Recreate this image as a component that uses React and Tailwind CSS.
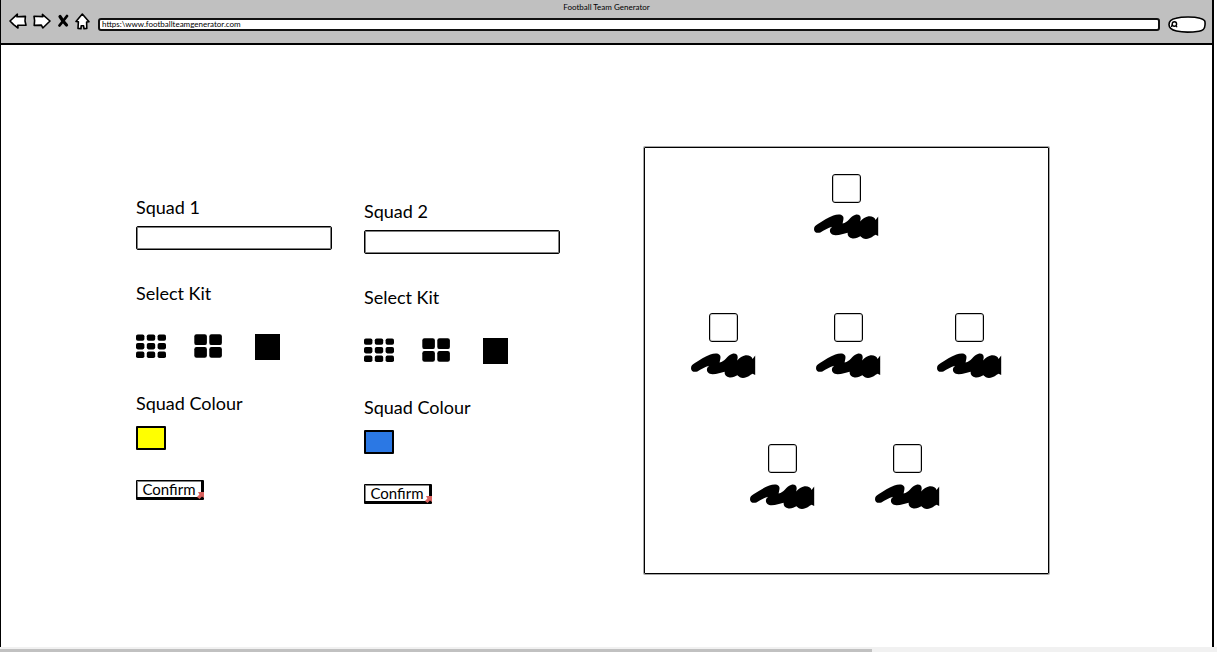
const FONT = "font-[Lato,'Open_Sans',sans-serif]";

function BackIcon() {
  return (
    <svg viewBox="0 0 18 16" className="h-4 w-[18px]" fill="#fff" stroke="#000" strokeWidth="1.6" strokeLinejoin="round" aria-hidden="true">
      <path d="M1 8 8.4 1.2 8 3.8 16.4 3.4 16 8 17 12.2 8.8 12.3 9 15 4.6 11.6Z" />
    </svg>
  );
}

function ForwardIcon() {
  return (
    <svg viewBox="0 0 18 16" className="h-4 w-[18px]" fill="#fff" stroke="#000" strokeWidth="1.6" strokeLinejoin="round" aria-hidden="true">
      <path d="M17 8 9.4 1.4 9.8 3.6 1 3.2 1.6 7.6 1.2 12.4 8.4 12.1 9.8 15Z" />
    </svg>
  );
}

function StopIcon() {
  return (
    <svg viewBox="0 0 12 14" className="h-[14px] w-3" fill="none" stroke="#000" strokeLinecap="round" aria-hidden="true">
      <path d="M3 2.5 6 7 9.5 11" strokeWidth="3.2" />
      <path d="M10 2 6.5 6.5 2.5 11.5" strokeWidth="2.8" />
    </svg>
  );
}

function HomeIcon() {
  return (
    <svg viewBox="0 0 15 17" className="h-[17px] w-[15px]" fill="#fff" stroke="#000" strokeWidth="1.6" strokeLinejoin="round" aria-hidden="true">
      <path d="M7.3 1 1 8.4 3.4 8.8 3 15.4 6 15.8 6.2 12.8 8.6 12.8 9 15.8 11.8 15.4 11.6 9 14 8.8Z" />
    </svg>
  );
}

function BrowserBar() {
  return (
    <header className="flex h-[45px] flex-col border-b-2 border-black bg-[#c0c0c0]">
      <h1 className="h-[13px] pt-px text-center text-[8px] leading-[13px]">Football Team Generator</h1>
      <div className="flex h-[22px] items-center gap-2 pr-[6px] pl-2">
        <nav aria-label="Browser" className="flex items-center gap-[6px] pb-[6px]">
          <button type="button" aria-label="Back"><BackIcon /></button>
          <button type="button" aria-label="Forward"><ForwardIcon /></button>
          <button type="button" aria-label="Stop"><StopIcon /></button>
          <button type="button" aria-label="Home"><HomeIcon /></button>
        </nav>
        <input
          aria-label="Address"
          defaultValue="https:\www.footballteamgenerator.com"
          className="h-[13px] min-w-0 flex-1 rounded-[3px] border-2 border-[#111] bg-white px-[2px] text-[8px] leading-[9px] outline-none"
        />
        <button type="button" aria-label="Search">
          <svg viewBox="0 0 38 17" className="h-[17px] w-[38px]" fill="#fff" stroke="#000" strokeWidth="1.6" aria-hidden="true">
            <path d="M8 2.3C14 .6 26 .6 32 2.2 37 3.4 37.4 5.4 37 9 36.8 13 35.5 14.6 31 15.2 24 16.2 14 16.2 8.5 15 3.5 14 1 12 1 8.5 1 5 3.5 3.2 8 2.3Z" />
            <circle cx="6.4" cy="8" r="2.2" strokeWidth="1.4" />
            <path d="M8 9.5 9 11.3M4 8.5 3.6 11" strokeWidth="1.3" />
          </svg>
        </button>
      </div>
    </header>
  );
}

function KitPicker({ name }) {
  return (
    <div role="group" aria-label={`${name} kit`} className="mt-[29px] flex h-[26px] items-start">
      <button type="button" aria-label="Nine squares kit">
        <svg viewBox="0 0 30 24" className="h-6 w-[30px]" aria-hidden="true">
          {[0, 10.8, 21.6].map((x) =>
            [0.4, 9, 17.6].map((y) => <rect key={`${x}-${y}`} x={x} y={y} width="8.4" height="6.4" rx="1.8" />)
          )}
        </svg>
      </button>
      <button type="button" aria-label="Four squares kit" className="ml-7">
        <svg viewBox="0 0 28 24" className="h-6 w-7" aria-hidden="true">
          {[0.3, 15.3].map((x) =>
            [0.3, 13].map((y) => <rect key={`${x}-${y}`} x={x} y={y} width="12.6" height="10.8" rx="2.2" />)
          )}
        </svg>
      </button>
      <button type="button" aria-label="Plain kit" className="ml-[33px] h-[26px] w-[25px] bg-black" />
    </div>
  );
}

function SquadForm({ id, name, colour, className }) {
  return (
    <form className={`flex flex-col items-start ${className}`} onSubmit={(e) => e.preventDefault()}>
      <label htmlFor={`${id}-name`} className="text-lg leading-6">{name}</label>
      <input
        id={`${id}-name`}
        className="mt-[7px] h-6 w-full rounded-[2px] border border-black bg-white px-1 text-sm shadow-[inset_0_0_0_1px_rgba(0,0,0,0.5)] outline-none"
      />
      <p className="mt-[31px] text-lg leading-6">Select Kit</p>
      <KitPicker name={name} />
      <label htmlFor={`${id}-colour`} className="mt-[31px] text-lg leading-6">Squad Colour</label>
      <input
        id={`${id}-colour`}
        type="color"
        defaultValue={colour}
        className="mt-[11px] h-6 w-[30px] appearance-none rounded-[1px] border-2 border-black p-0 [&::-webkit-color-swatch]:rounded-none [&::-webkit-color-swatch]:border-0 [&::-webkit-color-swatch-wrapper]:p-0"
      />
      <button
        type="submit"
        className="relative mt-[30px] h-5 w-[68px] rounded-[1px] border border-r-[3px] border-b-[3px] border-black bg-white text-center text-[15px] leading-4 shadow-[inset_1px_1px_0_rgba(0,0,0,0.5)]"
      >
        Confirm
        <svg viewBox="0 0 7 7" className="absolute -right-[3px] -bottom-[2px] h-[7px] w-[7px]" fill="#d9625f" aria-hidden="true">
          <path d="M1 0H7V6L5 4.6 2.5 7 0 5 2.4 2.4Z" />
        </svg>
      </button>
    </form>
  );
}

function Player() {
  return (
    <div className="flex w-[65px] flex-col items-center">
      <div className="h-[29px] w-[29px] rounded-[3px] border border-black shadow-[inset_0_0_0_1px_rgba(0,0,0,0.2)]" />
      <svg viewBox="0 0 65 26" className="mt-[11px] h-[26px] w-[65px]" role="img" aria-label="Player name">
        <path d="M0 15.2C0 12.8 1.4 11.4 3.5 10.2 9 7 14 3.4 19.3 1.5 22 .5 25 .2 27 .8 29.4 1.8 29.8 3.6 29.4 5.4L28.6 9.6C31.2 9 33.2 7.6 34.8 5.8 37 3.2 39 1.2 41.6.7 45 .2 46.8 2 46.7 4.4L46.2 7.4C48.6 4.8 51.5 2.8 54.5 2.3 58 2 60.6 3.2 61.6 6L64.2 2.4V22L61.6 20.8C59 22 57 24.6 52 25 49.6 25 48 23.8 46.4 22.2 44 23.4 42 24.6 38.6 24.4 35 24 33.4 22 33.6 18.8 30 20 26 21 21.6 21.3 17.6 21.2 15.4 18.6 16 15.8 16.3 14.6 17.2 13.6 18.2 12.8 14 13.8 10 16.4 6.4 18.4 3 19.6 0 18.2 0 15.2Z" />
      </svg>
    </div>
  );
}

function Pitch() {
  return (
    <section aria-label="Pitch" className="mt-[102px] flex h-[427px] flex-col rounded-[1px] border border-black pt-[26px] shadow-[0_0_0_1px_rgba(0,0,0,0.35)]">
      <div className="flex justify-center"><Player /></div>
      <div className="mt-[73px] grid grid-cols-[125px_121px_65px] justify-center">
        <Player />
        <Player />
        <Player />
      </div>
      <div className="mt-[65px] flex justify-center gap-[60px] pr-[3px]">
        <Player />
        <Player />
      </div>
    </section>
  );
}

export default function App() {
  return (
    <div className={`flex min-h-screen flex-col bg-white text-black ${FONT}`}>
      <div className="mr-[3px] flex flex-1 flex-col border-r-2 border-l border-black">
        <BrowserBar />
        <main className="grid flex-1 grid-cols-[135fr_196fr_32fr_196fr_84fr_405fr_163fr] items-start">
          <SquadForm id="squad-1" name="Squad 1" colour="#ffff00" className="col-start-2 mt-[150px]" />
          <SquadForm id="squad-2" name="Squad 2" colour="#2b78e4" className="col-start-4 mt-[154px]" />
          <div className="col-start-6"><Pitch /></div>
        </main>
      </div>
      <div className="h-[5px] bg-[#f1f1f1] pt-[2px]">
        <div className="h-[3px] w-[872px] max-w-full bg-[#c1c1c1]" />
      </div>
    </div>
  );
}
